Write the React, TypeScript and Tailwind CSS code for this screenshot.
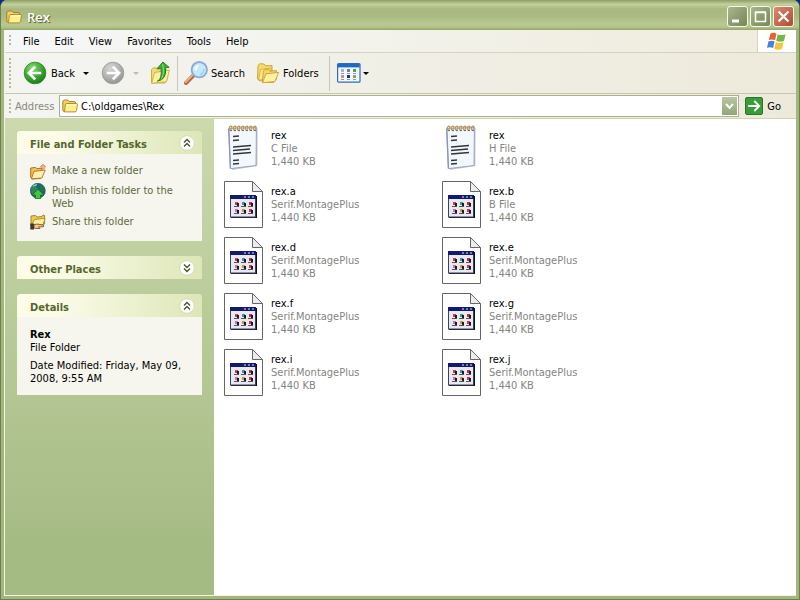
import React from "react";

const FONT = "font-['DejaVu_Sans_Condensed','DejaVu_Sans',Tahoma,sans-serif]";

function FolderIcon({ size = 16 }: { size?: number }) {
  return (
    <svg width={size} height={size} viewBox="0 0 16 16" className="shrink-0" aria-hidden="true">
      <path d="M.8 4Q.8 2 2.6 2H5.8L7.3 3.5H12.2Q13.6 3.5 13.6 5V13.5H2.4Q.8 13.5 .8 12Z" fill="#f3d35c" stroke="#9a7a20" strokeWidth=".9" />
      <path d="M3.4 6.6Q3.6 5.5 4.8 5.5H14.3Q15.7 5.5 15.4 6.8L14.5 12.6Q14.2 13.9 13 13.9H2.4Z" fill="#fdee8e" stroke="#a9872a" strokeWidth=".9" />
      <path d="M4.6 6.9H14.2" stroke="#fffde0" strokeWidth="1" />
    </svg>
  );
}

function NewFolderIcon() {
  return (
    <svg width="16" height="16" viewBox="0 0 16 16" className="mt-px shrink-0" aria-hidden="true">
      <path d="M.7 13.5V4L5.6 3.4L6.8 4.6L12 4.2V12L10.5 14.5L2 15Z" fill="#efc258" stroke="#a3641c" strokeWidth=".9" />
      <path d="M1.4 14.8L4 7.4L15.3 6L11.8 14Z" fill="#fff0b0" stroke="#b07326" strokeWidth=".9" />
      <path d="M13 0V5.6M10.3 2.8H15.8M11.2 1L14.8 4.7M14.8 1L11.2 4.7" stroke="#e8662d" strokeWidth="1" />
      <circle cx="13" cy="2.8" r="1.1" fill="#ffc488" />
    </svg>
  );
}

function PublishIcon() {
  return (
    <svg width="16" height="16" viewBox="0 0 16 16" className="shrink-0" aria-hidden="true">
      <circle cx="7.8" cy="7.8" r="7.5" fill="#1f5f86" stroke="#1c4c5c" strokeWidth=".6" />
      <path d="M1 5Q3 1 7 1L6 4L8.5 6L5 8.5L4 12L1.5 10Z" fill="#2c8a58" />
      <path d="M9.5 1.2Q14 3 14.8 7.5L12 9L9.7 5.2Z" fill="#26753c" />
      <path d="M3 3.4Q5 1.6 7 1.9" stroke="#9bd8e0" strokeWidth="1.2" fill="none" />
      <path d="M8 6.2L14 12H10.6V15.7H5.4V12H2Z" fill="#42c83e" stroke="#166d1e" strokeWidth=".8" />
    </svg>
  );
}

function ShareIcon() {
  return (
    <svg width="16" height="16" viewBox="0 0 16 16" className="shrink-0" aria-hidden="true">
      <path d="M1 2L5.5 1.5L7 3.1L12 2.5L13 1L14.6 1.6V10L11 11.5H1Z" fill="#eec75a" stroke="#a27b1d" strokeWidth=".9" />
      <path d="M1.4 11L4.5 5.6L15 4.3L13 11Z" fill="#fff1a2" stroke="#ad8928" strokeWidth=".9" />
      <path d="M.3 9.5H4V15.5H.3Z" fill="#40352b" />
      <path d="M4 10.8L7 10L13 11Q15 12 13 12.9L8.6 12.8L10 14.5H5.8L4 14Z" fill="#f2c58f" stroke="#6d4426" strokeWidth=".8" />
    </svg>
  );
}

function NavIcon({ kind }: { kind: "back" | "forward" }) {
  const back = kind === "back";
  return (
    <svg width="24" height="24" viewBox="0 0 24 24" className="shrink-0" aria-hidden="true">
      <defs>
        <radialGradient id={kind} cx="38%" cy="28%" r="75%">
          <stop offset="0" stopColor={back ? "#8ddb78" : "#d6d6d4"} />
          <stop offset=".55" stopColor={back ? "#42a934" : "#b4b4b2"} />
          <stop offset="1" stopColor={back ? "#1b7b1a" : "#929292"} />
        </radialGradient>
      </defs>
      <circle cx="12" cy="12" r="10.8" fill={`url(#${kind})`} stroke={back ? "#2b8a25" : "#9d9d9b"} strokeWidth=".9" />
      <path
        d={back ? "M12.2 5.6L5.9 12L12.2 18.4M6.5 12H18.3" : "M11.8 5.6L18.1 12L11.8 18.4M17.5 12H5.7"}
        fill="none" stroke="#fff" strokeWidth="2.7"
      />
    </svg>
  );
}

function UpIcon() {
  return (
    <svg width="22" height="24" viewBox="0 0 22 24" className="shrink-0" aria-hidden="true">
      <path d="M1.5 22V8.5L3.5 6.8L8 7.2L9.5 9H17V18L15 22Z" fill="#f3dc6c" stroke="#c9a53a" strokeWidth=".9" />
      <path d="M1.6 22.3L4.5 11.5L19.4 9L16.6 20.7Z" fill="#fbf09c" stroke="#cdab42" strokeWidth=".9" />
      <path d="M7.3 20.2Q12.2 18.4 11.1 7.2L7 7.8L12.9 1L19.2 6.4L15.6 6.7Q16.9 18.7 7.3 20.2Z" fill="#3dae35" stroke="#1d7a20" strokeWidth=".9" />
      <path d="M12.6 3.2L13.4 8Q14 14.5 11.5 17.5" stroke="#91df7d" strokeWidth="1" fill="none" />
    </svg>
  );
}

function SearchIcon() {
  return (
    <svg width="24" height="24" viewBox="0 0 24 24" className="shrink-0" aria-hidden="true">
      <path d="M2 22L9.8 14" stroke="#b06c46" strokeWidth="4" strokeLinecap="round" />
      <path d="M1.7 21.2L9 13.7" stroke="#efb48a" strokeWidth="1.8" strokeLinecap="round" />
      <circle cx="15.3" cy="8.7" r="7.7" fill="#c4e9fb" stroke="#8fa9d2" strokeWidth="1.8" />
      <path d="M10 8.5Q11 4 15.5 3.5Q13 6 12.5 10Z" fill="#f4fdff" />
      <path d="M20 8Q19.6 12.5 15.8 13.7" stroke="#9bd2f1" strokeWidth="1.5" fill="none" />
    </svg>
  );
}

function FoldersIcon() {
  return (
    <svg width="24" height="22" viewBox="0 0 24 22" className="shrink-0" aria-hidden="true">
      <path d="M1.5 17L2 3.5L4 1.7L8 2L9.5 3.8L16 3.5V14L11 18.5L4 19Z" fill="#f5dc66" stroke="#c79d34" strokeWidth=".9" />
      <path d="M2.5 18L4.5 7.5L15 6L14 17Z" fill="#fbec8c" stroke="#d0a83e" strokeWidth=".8" />
      <path d="M6.5 20.3L7.3 9L9.2 7.3L13 7.7L14.2 9.2L20.5 8.6V17L17.4 20.5Z" fill="#f4d75c" stroke="#c79d34" strokeWidth=".9" />
      <path d="M6.5 20.7L10 11.8L22.6 10.4L19 19.5Z" fill="#fff2a4" stroke="#c9a036" strokeWidth=".9" />
    </svg>
  );
}

function ViewsIcon() {
  const colors = ["#a9b3cc", "#6a81a4", "#4aa05c", "#dd8a80", "#24386e", "#a59b4b"];
  return (
    <svg width="24" height="20" viewBox="0 0 24 20" className="shrink-0" aria-hidden="true">
      <rect x=".6" y=".6" width="22.4" height="18.6" rx="1" fill="#f2f8ff" stroke="#2d6cb8" strokeWidth="1.2" />
      <rect x="1" y="1" width="21.6" height="3.4" fill="#1f68c4" />
      {colors.map((c, i) => (
        <g key={i}>
          <rect x={4 + (i % 3) * 6} y={i < 3 ? 6 : 12} width="3" height="3" fill={c} />
          <rect x={4 + (i % 3) * 6} y={i < 3 ? 10 : 16} width="3" height="1" fill="#8c96a8" />
        </g>
      ))}
    </svg>
  );
}

function Flag() {
  return (
    <svg width="20" height="19" viewBox="0 0 20 19" aria-hidden="true">
      <path d="M3.5 1.6Q6.5 0 9.5 1.7L8 8.2Q5 6.8 1.8 8.1Z" fill="#e9602b" />
      <path d="M10.7 2.2Q14 4 18.6 2.2L17 9Q13.2 10.6 9.2 8.8Z" fill="#76b843" />
      <path d="M1.5 9.3Q4.6 8 7.6 9.5L6.1 16Q3.2 14.5 0 15.8Z" fill="#4285d6" />
      <path d="M8.9 10.1Q12.4 11.8 16.6 10.2L15 16.8Q11.2 18.5 7.3 16.8Z" fill="#f6c33a" />
    </svg>
  );
}

function NotepadIcon() {
  return (
    <svg width="48" height="48" viewBox="0 0 48 48" className="shrink-0" aria-hidden="true">
      <path d="M10 5L38.6 4L38.4 42L13 46Z" fill="#c3c9d6" />
      <path d="M9.6 4.5L37.4 3.5L37 41.5L11.4 44.6Z" fill="#f3f8fc" stroke="#8b97b2" strokeWidth=".8" />
      <path d="M9.8 5L11.4 44.5" stroke="#8796bd" strokeWidth="1.3" />
      {[11, 15, 19, 23, 27, 31, 35].map((x) => (
        <g key={x}>
          <path d={`M${x} 6.5Q${x - 2} 3 ${x + 1} 2.2Q${x + 3} 2.5 ${x + 1} 5`} fill="none" stroke="#b59a63" strokeWidth="1.3" />
          <circle cx={x + 1} cy="6.3" r=".9" fill="#5b5142" />
        </g>
      ))}
      <path d="M14 12.5L20 12M14 16.5L20 16M14 23L32 21.5M14 26.5L31 25M14 30L32 28.5M14 36.5L20 36M14 40L20 39.5" stroke="#30363c" strokeWidth="1.3" />
    </svg>
  );
}

function DocumentIcon() {
  const dots = ["#c6423e", "#3c9b91", "#bd2f36", "#c573b5", "#c49a3c", "#c83c48"];
  return (
    <svg width="48" height="48" viewBox="0 0 48 48" className="shrink-0" aria-hidden="true">
      <path d="M5.5 1.5H33.5L43.5 11.5V47.5H5.5Z" fill="#fff" stroke="#666" strokeWidth="1" />
      <path d="M33.5 1.5V11.5H43.5Z" fill="#ececec" stroke="#666" strokeWidth="1" />
      <rect x="12" y="16" width="26" height="22" fill="#111" />
      <rect x="11.5" y="15.5" width="25" height="21.5" fill="#e9e8ee" stroke="#3a4066" strokeWidth="1" />
      <rect x="11" y="15" width="26" height="4" fill="#101b70" />
      <path d="M25 17H27M29 17H31M33 17H35" stroke="#dfe3ff" strokeWidth="1.2" />
      {dots.map((c, i) => {
        const x = 16 + (i % 3) * 7;
        const y = i < 3 ? 22 : 29;
        return (
          <g key={i}>
            <rect x={x} y={y} width="3" height="3" fill={c} />
            <rect x={x + 2} y={y + 1} width="2" height="3" fill="#1c1a33" />
            <rect x={x - 1} y={y + 4} width="5" height="1" fill="#555" />
          </g>
        );
      })}
    </svg>
  );
}

function Grip() {
  return (
    <span className="my-[5px] w-[2px] self-stretch bg-[repeating-linear-gradient(to_bottom,#b9b6a8_0_2px,transparent_2px_4px)]" />
  );
}

function DownArrow({ muted = false }: { muted?: boolean }) {
  return (
    <svg width="6" height="3" viewBox="0 0 6 3" className="shrink-0" aria-hidden="true">
      <path d="M0 0H6L3 3Z" fill={muted ? "#bdbbae" : "#000"} />
    </svg>
  );
}

function CaptionButton({ label, close = false, children }: { label: string; close?: boolean; children: React.ReactNode }) {
  return (
    <button
      aria-label={label}
      className={`flex size-[21px] items-center justify-center rounded-[3px] border border-[#f7f8ea] ${
        close ? "bg-linear-to-br from-[#d98a70] to-[#b04a30]" : "bg-linear-to-br from-[#a9b68a] to-[#76875a]"
      }`}
    >
      <svg width="19" height="19" viewBox="0 0 19 19" fill="none" stroke="#fff" aria-hidden="true">
        {children}
      </svg>
    </button>
  );
}

function Panel({ title, open, children }: { title: string; open: boolean; children?: React.ReactNode }) {
  return (
    <section>
      <button
        aria-expanded={open}
        className="flex h-[23px] w-full items-center justify-between rounded-t-[3px] bg-linear-to-r from-[#fcfce9] from-20% to-[#dde6b8] pr-[7px] pl-[13px] text-left font-bold text-[#56662d]"
      >
        <span className="pt-[3px]">{title}</span>
        <svg width="16" height="16" viewBox="0 0 16 16" aria-hidden="true">
          <circle cx="8" cy="8" r="7.3" fill="#fff" stroke="#ced6ae" strokeWidth=".8" />
          <path
            d={open ? "M5 7.5L8 4.5L11 7.5M5 11.5L8 8.5L11 11.5" : "M5 4.5L8 7.5L11 4.5M5 8.5L8 11.5L11 8.5"}
            fill="none" stroke="#44542a" strokeWidth="1.4"
          />
        </svg>
      </button>
      {open && <div className="bg-[#f6f6ee]">{children}</div>}
    </section>
  );
}

function Task({ icon, children }: { icon: React.ReactNode; children: React.ReactNode }) {
  return (
    <a href="#" className="flex items-start gap-[6px]">
      {icon}
      <span className="py-px">{children}</span>
    </a>
  );
}

const files = [
  { name: "rex", type: "C File", note: true },
  { name: "rex", type: "H File", note: true },
  { name: "rex.a", type: "Serif.MontagePlus" },
  { name: "rex.b", type: "B File" },
  { name: "rex.d", type: "Serif.MontagePlus" },
  { name: "rex.e", type: "Serif.MontagePlus" },
  { name: "rex.f", type: "Serif.MontagePlus" },
  { name: "rex.g", type: "Serif.MontagePlus" },
  { name: "rex.i", type: "Serif.MontagePlus" },
  { name: "rex.j", type: "Serif.MontagePlus" },
];

export default function App() {
  return (
    <div className="flex min-h-screen bg-[#0a2a8c]">
      <div className={`flex flex-1 flex-col overflow-hidden rounded-t-[7px] border-x border-b border-[#6f8050] bg-[#a3b37c] text-[11px] leading-[13px] text-black ${FONT}`}>
        <header className="flex h-[30px] shrink-0 items-center bg-[linear-gradient(to_bottom,#8c9f66_0%,#a3b37c_6%,#c3cf9d_14%,#a9b880_30%,#abba82_55%,#bac892_80%,#b5c48c_90%,#93a569_100%)] px-[5px] pt-[3px]">
          <FolderIcon />
          <h1 className="flex-1 pl-[5px] font-['Open_Sans','Noto_Sans',sans-serif] text-[13px] leading-[16px] font-semibold text-white [text-shadow:1px_1px_1px_#4d5a2e]">Rex</h1>
          <div className="flex gap-[2px]">
            <CaptionButton label="Minimize"><path d="M4 14H11" strokeWidth="3" /></CaptionButton>
            <CaptionButton label="Maximize"><path d="M4.5 5.5H14.5V14.5H4.5ZM4 5H15" strokeWidth="1.6" /></CaptionButton>
            <CaptionButton label="Close" close><path d="M4.5 4.5L14.5 14.5M14.5 4.5L4.5 14.5" strokeWidth="2.2" /></CaptionButton>
          </div>
        </header>

        <div className="flex flex-1 flex-col border-x-3 border-b-3 border-[#a3b67e]">
          <div className="flex flex-1 flex-col border-b border-l border-[#f3f5e4]">
            <nav className="flex h-[23px] items-center border-b border-[#d5d2c0] bg-linear-to-r from-[#f6f7f8] to-[#efecdc] pl-[4px]">
              <Grip />
              <div className="flex flex-1 gap-[15px] pl-[12px]">
                {["File", "Edit", "View", "Favorites", "Tools", "Help"].map((m) => (
                  <button key={m}>{m}</button>
                ))}
              </div>
              <div className="flex h-[22px] w-[39px] items-center justify-center border-l border-[#d5d2c0] bg-white">
                <Flag />
              </div>
            </nav>

            <div role="toolbar" className="flex h-[41px] items-center border-b border-[#c9c6b0] bg-linear-to-r from-[#f4f4f1] to-[#edeadb] pl-[4px]">
              <Grip />
              <button className="flex items-center gap-[4px] pl-[12px]"><NavIcon kind="back" />Back</button>
              <button aria-label="Back history" className="pl-[8px]"><DownArrow /></button>
              <button aria-label="Forward" className="pl-[12px]"><NavIcon kind="forward" /></button>
              <button aria-label="Forward history" className="pl-[8px]"><DownArrow muted /></button>
              <button aria-label="Up" className="pl-[11px]"><UpIcon /></button>
              <span className="ml-[5px] h-[35px] w-px bg-[#c9c7ba]" />
              <button className="flex items-center gap-[3px] pl-[6px]"><SearchIcon />Search</button>
              <button className="flex items-center gap-[3px] pl-[11px]"><FoldersIcon />Folders</button>
              <span className="ml-[10px] h-[35px] w-px bg-[#c9c7ba]" />
              <button aria-label="Views" className="flex items-center gap-[2px] pl-[7px]"><ViewsIcon /><DownArrow /></button>
            </div>

            <div className="flex h-[25px] items-center border-b border-[#cfd3b2] bg-linear-to-r from-[#f4f4f1] to-[#edeadb] pl-[4px]">
              <Grip />
              <label htmlFor="address" className="w-[48px] pl-[4px] text-[#8b897c]">Address</label>
              <div className="flex h-[22px] flex-1 items-center border border-[#a9b289] bg-white pr-px pl-[2px]">
                <FolderIcon />
                <input id="address" defaultValue="C:\oldgames\Rex" className="min-w-0 flex-1 bg-transparent pl-[3px] outline-none" />
                <button aria-label="Show addresses" className="flex h-[18px] w-[15px] items-center justify-center bg-linear-to-b from-[#bac7a0] to-[#93a47b]">
                  <svg width="9" height="7" viewBox="0 0 9 7" aria-hidden="true"><path d="M1 1L4.5 4.8L8 1" fill="none" stroke="#fff" strokeWidth="2" /></svg>
                </button>
              </div>
              <button className="flex items-center gap-[4px] pr-[15px] pl-[6px]">
                <svg width="18" height="18" viewBox="0 0 18 18" aria-hidden="true">
                  <rect x=".5" y=".5" width="17" height="17" rx="1.5" fill="#3a9b3a" stroke="#27782b" />
                  <path d="M9.3 4L14.3 9L9.3 14M13.6 9H3.2" fill="none" stroke="#fff" strokeWidth="1.8" />
                </svg>
                Go
              </button>
            </div>

            <div className="flex flex-1">
              <aside className="flex w-[209px] shrink-0 flex-col gap-[15px] bg-linear-to-b from-[#ccd9ad] to-[#a5bb84] to-90% px-[12px] pt-[12px]">
                <Panel title="File and Folder Tasks" open>
                  <div className="flex flex-col gap-[3px] px-[13px] pt-[9px] pb-[11px] text-[#5d6b3f]">
                    <Task icon={<NewFolderIcon />}>Make a new folder</Task>
                    <Task icon={<PublishIcon />}>Publish this folder to the Web</Task>
                    <Task icon={<ShareIcon />}>Share this folder</Task>
                  </div>
                </Panel>
                <Panel title="Other Places" open={false} />
                <Panel title="Details" open>
                  <div className="flex flex-col gap-[5px] px-[13px] pt-[11px] pb-[10px]">
                    <p><b>Rex</b><br />File Folder</p>
                    <p>Date Modified: Friday, May 09, 2008, 9:55 AM</p>
                  </div>
                </Panel>
              </aside>

              <main className="flex-1 bg-white pt-px pl-[5px]">
                <ul className="grid grid-cols-[repeat(auto-fill,218px)]">
                  {files.map((f, i) => (
                    <li key={i} className="flex h-[56px] items-center gap-[4px]">
                      {f.note ? <NotepadIcon /> : <DocumentIcon />}
                      <div className="text-[#85857f]">
                        <p className="text-black">{f.name}</p>
                        <p>{f.type}</p>
                        <p>1,440 KB</p>
                      </div>
                    </li>
                  ))}
                </ul>
              </main>
            </div>
          </div>
        </div>
      </div>
    </div>
  );
}
